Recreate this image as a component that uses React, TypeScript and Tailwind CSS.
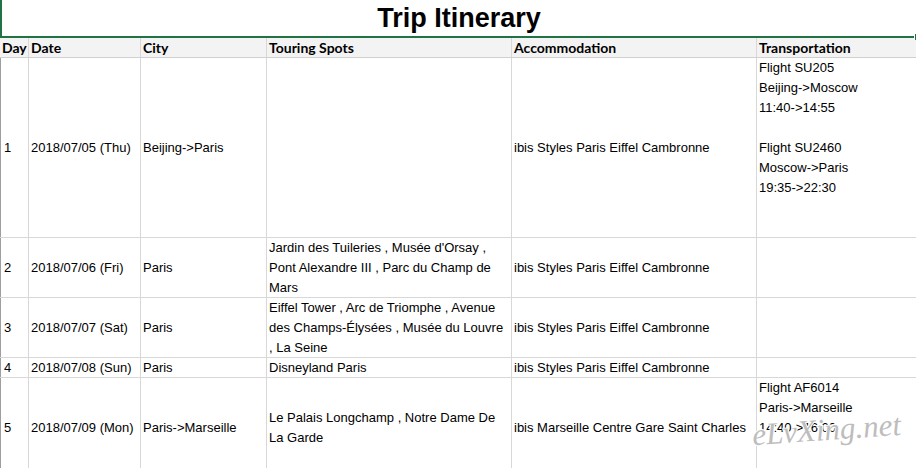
import React from "react";

const W = ["w-[29px]", "w-[112px]", "w-[126px]", "w-[245px]", "w-[245px]", "w-[200px]"];

type Row = {
  h: string;
  cells: React.ReactNode[];
};

const L = ({ lines }: { lines: string[] }) => (
  <div>
    {lines.map((l, i) => (
      <div key={i} className="h-[20px] whitespace-nowrap">
        {l === "" ? "\u00a0" : l}
      </div>
    ))}
  </div>
);

const rows: Row[] = [
  {
    h: "h-[180px]",
    cells: [
      "1",
      "2018/07/05 (Thu)",
      "Beijing->Paris",
      "",
      "ibis Styles Paris Eiffel Cambronne",
      <L
        lines={[
          "Flight SU205",
          "Beijing->Moscow",
          "11:40->14:55",
          "",
          "Flight SU2460",
          "Moscow->Paris",
          "19:35->22:30",
        ]}
      />,
    ],
  },
  {
    h: "h-[60px]",
    cells: [
      "2",
      "2018/07/06 (Fri)",
      "Paris",
      <L lines={["Jardin des Tuileries , Musée d'Orsay ,", "Pont Alexandre III , Parc du Champ de", "Mars"]} />,
      "ibis Styles Paris Eiffel Cambronne",
      "",
    ],
  },
  {
    h: "h-[60px]",
    cells: [
      "3",
      "2018/07/07 (Sat)",
      "Paris",
      <L lines={["Eiffel Tower , Arc de Triomphe , Avenue", "des Champs-Élysées , Musée du Louvre", ", La Seine"]} />,
      "ibis Styles Paris Eiffel Cambronne",
      "",
    ],
  },
  {
    h: "h-[20px]",
    cells: ["4", "2018/07/08 (Sun)", "Paris", "Disneyland Paris", "ibis Styles Paris Eiffel Cambronne", ""],
  },
  {
    h: "h-[100px]",
    cells: [
      "5",
      "2018/07/09 (Mon)",
      "Paris->Marseille",
      <L lines={["Le Palais Longchamp , Notre Dame De", "La Garde"]} />,
      "ibis Marseille Centre Gare Saint Charles",
      <L lines={["Flight AF6014", "Paris->Marseille", "14:40->16:00"]} />,
    ],
  },
];

const headers = ["Day", "Date", "City", "Touring Spots", "Accommodation", "Transportation"];

export default function App() {
  return (
    <div className="relative w-[916px] h-[468px] overflow-hidden bg-white text-black">
      {/* Title */}
      <div className="relative h-[38px] w-[914px] border-l-2 border-b-2 border-[#217346] flex items-center justify-center">
        <span className="font-['Liberation_Sans',Arial,sans-serif] font-bold text-[27px] leading-none pt-[1px] pl-[2px]">
          Trip Itinerary
        </span>
      </div>
      <div className="absolute left-[914px] top-[34px] w-[4px] h-[6px] bg-[#217346] border-l border-white" />

      {/* Header */}
      <div className="flex w-[1100px] h-[20px] bg-[#f3f3f3] border-b border-[#d0d0d0] font-['Lato',sans-serif] font-bold text-[14px] leading-[19px]">
        {headers.map((h, i) => (
          <div key={i} className={`${W[i]} shrink-0 h-full border-r border-[#d8d8d8] pl-[2px] whitespace-nowrap`}>
            {h}
          </div>
        ))}
      </div>

      {/* Body */}
      <div className="font-['Liberation_Sans',Arial,sans-serif] text-[13px] leading-[20px]">
        {rows.map((r, ri) => (
          <div key={ri} className={`flex w-[1100px] ${r.h} border-b border-[#d8d8d8]`}>
            {r.cells.map((c, ci) => (
              <div
                key={ci}
                className={`${W[ci]} shrink-0 h-full border-r border-[#d8d8d8] flex whitespace-nowrap ${
                  ci === 0 ? "border-l border-l-[#9e9e9e] pl-[3px]" : "pl-[2px]"
                } ${ci === 5 ? "items-start" : "items-center"}`}
              >
                {c}
              </div>
            ))}
          </div>
        ))}
      </div>

      {/* Watermark */}
      <div className="absolute left-[752px] top-[414px] font-['Liberation_Serif',serif] italic text-[31px] leading-none text-[#bdbdbd] [-webkit-text-stroke:2px_white] [paint-order:stroke_fill] -rotate-[4deg] whitespace-nowrap">
        eLvXing.net
      </div>
    </div>
  );
}
